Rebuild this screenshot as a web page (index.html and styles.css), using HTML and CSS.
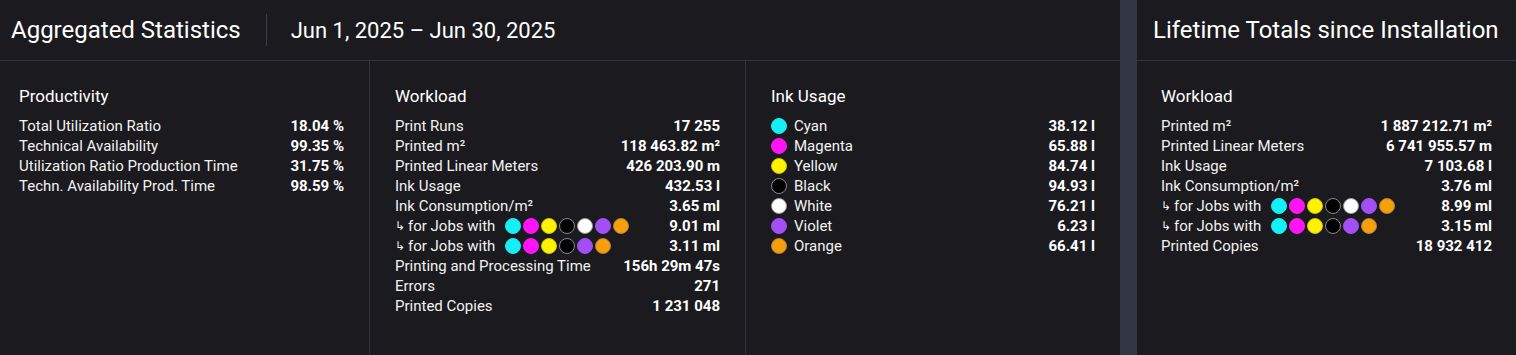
FILE: index.html
```html
<!DOCTYPE html>
<html lang="en">
<head>
    <meta charset="UTF-8">
    <meta name="viewport" content="width=device-width, initial-scale=1.0">
    <title>Statistics</title>
    <link rel="stylesheet" href="styles.css">
</head>
<body>
    <div class="page">
        <div class="panel panel-main">
            <div class="panel-header">
                <h2>Aggregated Statistics</h2>
                <span class="divider"></span>
                <span class="range">Jun 1, 2025 – Jun 30, 2025</span>
            </div>
            <div class="columns">
                <div class="col col-first">
                    <h3>Productivity</h3>
                    <div class="row"><span>Total Utilization Ratio</span><b>18.04 %</b></div>
                    <div class="row"><span>Technical Availability</span><b>99.35 %</b></div>
                    <div class="row"><span>Utilization Ratio Production Time</span><b>31.75 %</b></div>
                    <div class="row"><span>Techn. Availability Prod. Time</span><b>98.59 %</b></div>
                </div>
                <div class="col">
                    <h3>Workload</h3>
                    <div class="row"><span>Print Runs</span><b>17 255</b></div>
                    <div class="row"><span>Printed m²</span><b>118 463.82 m²</b></div>
                    <div class="row"><span>Printed Linear Meters</span><b>426 203.90 m</b></div>
                    <div class="row"><span>Ink Usage</span><b>432.53 l</b></div>
                    <div class="row"><span>Ink Consumption/m²</span><b>3.65 ml</b></div>
                    <div class="row">
                        <span class="jobs"><i class="arrow">↳</i><span>for Jobs with</span><span class="dots"><em class="dot cyan"></em><em class="dot magenta"></em><em class="dot yellow"></em><em class="dot black"></em><em class="dot white"></em><em class="dot violet"></em><em class="dot orange"></em></span></span>
                        <b>9.01 ml</b>
                    </div>
                    <div class="row">
                        <span class="jobs"><i class="arrow">↳</i><span>for Jobs with</span><span class="dots"><em class="dot cyan"></em><em class="dot magenta"></em><em class="dot yellow"></em><em class="dot black"></em><em class="dot violet"></em><em class="dot orange"></em></span></span>
                        <b>3.11 ml</b>
                    </div>
                    <div class="row"><span>Printing and Processing Time</span><b>156h 29m 47s</b></div>
                    <div class="row"><span>Errors</span><b>271</b></div>
                    <div class="row"><span>Printed Copies</span><b>1 231 048</b></div>
                </div>
                <div class="col">
                    <h3>Ink Usage</h3>
                    <div class="row"><span class="ink"><em class="dot cyan"></em>Cyan</span><b>38.12 l</b></div>
                    <div class="row"><span class="ink"><em class="dot magenta"></em>Magenta</span><b>65.88 l</b></div>
                    <div class="row"><span class="ink"><em class="dot yellow"></em>Yellow</span><b>84.74 l</b></div>
                    <div class="row"><span class="ink"><em class="dot black"></em>Black</span><b>94.93 l</b></div>
                    <div class="row"><span class="ink"><em class="dot white"></em>White</span><b>76.21 l</b></div>
                    <div class="row"><span class="ink"><em class="dot violet"></em>Violet</span><b>6.23 l</b></div>
                    <div class="row"><span class="ink"><em class="dot orange"></em>Orange</span><b>66.41 l</b></div>
                </div>
            </div>
        </div>
        <div class="panel panel-side">
            <div class="panel-header">
                <h2>Lifetime Totals since Installation</h2>
            </div>
            <div class="columns">
                <div class="col">
                    <h3>Workload</h3>
                    <div class="row"><span>Printed m²</span><b>1 887 212.71 m²</b></div>
                    <div class="row"><span>Printed Linear Meters</span><b>6 741 955.57 m</b></div>
                    <div class="row"><span>Ink Usage</span><b>7 103.68 l</b></div>
                    <div class="row"><span>Ink Consumption/m²</span><b>3.76 ml</b></div>
                    <div class="row">
                        <span class="jobs"><i class="arrow">↳</i><span>for Jobs with</span><span class="dots"><em class="dot cyan"></em><em class="dot magenta"></em><em class="dot yellow"></em><em class="dot black"></em><em class="dot white"></em><em class="dot violet"></em><em class="dot orange"></em></span></span>
                        <b>8.99 ml</b>
                    </div>
                    <div class="row">
                        <span class="jobs"><i class="arrow">↳</i><span>for Jobs with</span><span class="dots"><em class="dot cyan"></em><em class="dot magenta"></em><em class="dot yellow"></em><em class="dot black"></em><em class="dot violet"></em><em class="dot orange"></em></span></span>
                        <b>3.15 ml</b>
                    </div>
                    <div class="row"><span>Printed Copies</span><b>18 932 412</b></div>
                </div>
            </div>
        </div>
    </div>
</body>
</html>
```

FILE: styles.css
```css
html, body {
    margin: 0;
    height: 100%;
    background-color: #323743;
}
body {
    font-family: Roboto, "Liberation Sans", sans-serif;
    color: #f2f2f2;
}
.page {
    display: flex;
    gap: 17px;
    height: 355px;
}
.panel {
    background-color: #1b1a1f;
    display: flex;
    flex-direction: column;
}
.panel-main {
    width: 1120px;
}
.panel-side {
    flex: 1;
}
.panel-header {
    height: 60px;
    border-bottom: 1px solid #30343f;
    display: flex;
    align-items: center;
    padding-left: 11px;
}
.panel-side .panel-header {
    padding-left: 16px;
}
.panel-header h2 {
    margin: 0 0 1px 0;
    font-size: 24px;
    font-weight: 400;
    color: #ffffff;
}
.divider {
    width: 1px;
    height: 32px;
    background-color: #3a3e4a;
    margin: 0 24px 0 25px;
}
.range {
    font-size: 22px;
    color: #ffffff;
}
.columns {
    flex: 1;
    display: grid;
    grid-template-columns: 369px 376px 1fr;
}
.panel-side .columns {
    grid-template-columns: 1fr;
}
.col {
    padding: 25px 25px 0 25px;
    border-left: 1px solid #30343f;
}
.col-first {
    border-left: none;
    padding-left: 19px;
}
.panel-side .col {
    border-left: none;
    padding-left: 24px;
    padding-right: 24px;
}
.col h3 {
    margin: 0 0 10px 0;
    font-size: 17px;
    font-weight: 400;
    line-height: 20px;
    color: #ffffff;
}
.row {
    display: flex;
    justify-content: space-between;
    align-items: center;
    height: 20px;
    font-size: 15px;
}
.row b {
    font-weight: 700;
    color: #ffffff;
    white-space: nowrap;
}
.jobs, .ink {
    display: flex;
    align-items: center;
    white-space: nowrap;
}
.arrow {
    font-style: normal;
    font-size: 12px;
    margin-right: 3px;
}
.dots {
    display: flex;
    gap: 2px;
    margin-left: 10px;
}
.dot {
    display: inline-block;
    box-sizing: border-box;
    width: 16px;
    height: 16px;
    border-radius: 50%;
    border: 1px solid #6b6b6b;
    flex-shrink: 0;
}
.ink .dot {
    margin-right: 7px;
}
.cyan { background-color: #14f0f5; border-color: #14f0f5; }
.magenta { background-color: #ff14f5; border-color: #ff14f5; }
.yellow { background-color: #fff200; border-color: #c7c700; }
.black { background-color: #000000; border-color: #8a8a8a; }
.white { background-color: #ffffff; border-color: #9a9a9a; }
.violet { background-color: #a34ff5; border-color: #a34ff5; }
.orange { background-color: #f5a00a; border-color: #b08040; }
```
